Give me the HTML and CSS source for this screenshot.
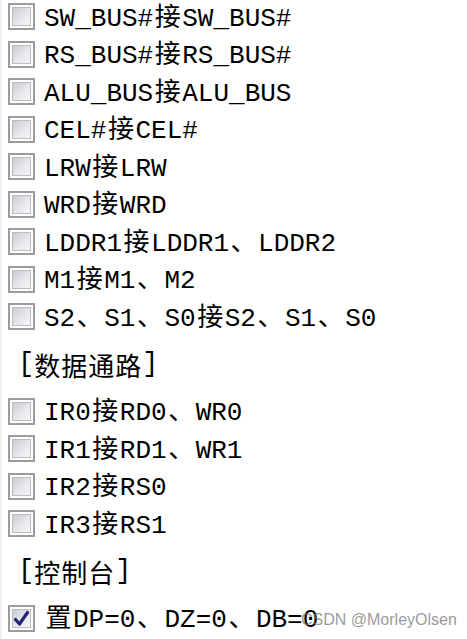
FILE: index.html
```html
<!DOCTYPE html>
<html lang="zh">
<head>
<meta charset="utf-8">
<link rel="stylesheet" href="styles.css">
</head>
<body>
<div class="panel">
  <div class="list">
    <div class="row"><span class="cb"></span><span class="lbl">SW_BUS#<span class="c">接</span>SW_BUS#</span></div>
    <div class="row"><span class="cb"></span><span class="lbl">RS_BUS#<span class="c">接</span>RS_BUS#</span></div>
    <div class="row"><span class="cb"></span><span class="lbl">ALU_BUS<span class="c">接</span>ALU_BUS</span></div>
    <div class="row"><span class="cb"></span><span class="lbl">CEL#<span class="c">接</span>CEL#</span></div>
    <div class="row"><span class="cb"></span><span class="lbl">LRW<span class="c">接</span>LRW</span></div>
    <div class="row"><span class="cb"></span><span class="lbl">WRD<span class="c">接</span>WRD</span></div>
    <div class="row"><span class="cb"></span><span class="lbl">LDDR1<span class="c">接</span>LDDR1<span class="c">、</span>LDDR2</span></div>
    <div class="row"><span class="cb"></span><span class="lbl">M1<span class="c">接</span>M1<span class="c">、</span>M2</span></div>
    <div class="row"><span class="cb"></span><span class="lbl">S2<span class="c">、</span>S1<span class="c">、</span>S0<span class="c">接</span>S2<span class="c">、</span>S1<span class="c">、</span>S0</span></div>
    <div class="section">[<span class="h">数据通路</span>]</div>
    <div class="row"><span class="cb"></span><span class="lbl">IR0<span class="c">接</span>RD0<span class="c">、</span>WR0</span></div>
    <div class="row"><span class="cb"></span><span class="lbl">IR1<span class="c">接</span>RD1<span class="c">、</span>WR1</span></div>
    <div class="row"><span class="cb"></span><span class="lbl">IR2<span class="c">接</span>RS0</span></div>
    <div class="row"><span class="cb"></span><span class="lbl">IR3<span class="c">接</span>RS1</span></div>
    <div class="section">[<span class="h">控制台</span>]</div>
    <div class="row"><span class="cb checked"><svg viewBox="0 0 19 19" width="19" height="19"><path d="M3.5 10.5 L7.5 15 L15.5 3.5" fill="none" stroke="#23237a" stroke-width="3.2" stroke-linecap="round" stroke-linejoin="round"/></svg></span><span class="lbl"><span class="c">置</span>DP=0<span class="c">、</span>DZ=0<span class="c">、</span>DB=0</span></div>
  </div>
  <div class="watermark">CSDN @MorleyOlsen</div>
</div>
</body>
</html>
```

FILE: styles.css
```css
html, body {
  margin: 0;
  padding: 0;
  background: #ffffff;
}
.panel {
  position: relative;
  width: 467px;
  height: 639px;
  overflow: hidden;
  border-left: 2px solid #f0f0f0;
  box-sizing: border-box;
}
.list {
  display: flex;
  flex-direction: column;
  margin-top: -2px;
}
.row {
  height: 37.5px;
  display: flex;
  align-items: center;
  gap: 9px;
  padding-left: 6px;
}
.cb {
  width: 27px;
  height: 27px;
  box-sizing: border-box;
  border: 2px solid #9c9c9c;
  background: #ffffff;
  padding: 2px;
  display: flex;
  align-items: center;
  justify-content: center;
  flex: none;
  position: relative;
}
.cb::before {
  content: "";
  position: absolute;
  left: 2px;
  top: 2px;
  right: 2px;
  bottom: 2px;
  background: linear-gradient(135deg, #c9ccd1 0%, #e3e5e8 50%, #f7f7f8 100%);
  border: 1px solid #b9bcc0;
  box-sizing: border-box;
}
.cb svg {
  position: relative;
}
.lbl {
  font-family: "Liberation Mono", "Noto Sans CJK SC", monospace;
  font-size: 26px;
  color: #000000;
  white-space: nowrap;
  line-height: 1.2;
}
.c {
  font-family: "Noto Sans CJK SC", sans-serif;
  letter-spacing: 1.5px;
  padding-left: 1.5px;
}
.section {
  height: 57px;
  display: flex;
  align-items: center;
  padding-left: 16px;
  font-family: "Liberation Mono", "Noto Sans CJK SC", monospace;
  font-size: 27px;
  color: #000000;
  white-space: pre;
}
.h {
  font-family: "Noto Sans CJK SC", sans-serif;
  font-size: 26px;
  letter-spacing: 1px;
}
.watermark {
  position: absolute;
  left: 299px;
  top: 611px;
  font-family: "Liberation Sans", Arial, sans-serif;
  font-size: 16px;
  color: rgba(120, 120, 120, 0.75);
  white-space: nowrap;
}
```
